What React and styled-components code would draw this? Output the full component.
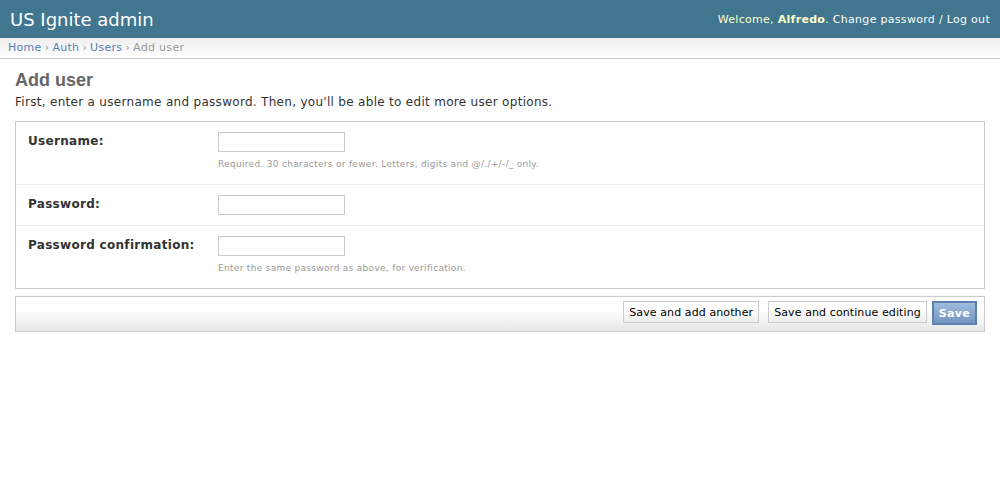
import styled, { createGlobalStyle } from "styled-components";

const GlobalStyle = createGlobalStyle`
  html, body {
    margin: 0;
    padding: 0;
    background: #fff;
  }
  body {
    font-family: "DejaVu Sans", "Liberation Sans", Arial, sans-serif;
    font-size: 12px;
    letter-spacing: 0.3px;
    color: #333;
  }
  a {
    color: #5b80b2;
    text-decoration: none;
  }
`;

const Header = styled.div`
  height: 38px;
  background: #417690;
  color: #fff;
  display: flex;
  align-items: center;
  justify-content: space-between;
  padding: 0 10px;
`;

const Brand = styled.h1`
  margin: 0;
  font-size: 18px;
  font-weight: normal;
  letter-spacing: 0;
  color: #fff;
`;

const UserTools = styled.div`
  font-size: 11px;
  color: #ffc;
  a {
    color: #fff;
  }
`;

const Breadcrumbs = styled.div`
  border-bottom: 1px solid #ccc;
  background: linear-gradient(#efefef, #fff);
  padding: 2px 8px 3px;
  font-size: 11px;
  line-height: 15px;
  color: #999;
`;

const Sep = styled.span`
  color: #999;
  margin: 0 3px;
`;

const Content = styled.div`
  padding: 10px 15px;
`;

const Title = styled.h1`
  margin: 0 0 4px;
  font-family: "Liberation Sans", Arial, sans-serif;
  font-size: 18px;
  line-height: 22px;
  font-weight: bold;
  letter-spacing: 0;
  color: #666;
`;

const Intro = styled.p`
  margin: 1px 0 11px;
  font-size: 12px;
  line-height: 15px;
`;

const Fieldset = styled.div`
  border: 1px solid #ccc;
`;

const Row = styled.div`
  display: flex;
  padding: 10px 12px;
  border-bottom: ${(p) => (p.$last ? "none" : "1px solid #eee")};
`;

const Label = styled.label`
  width: 190px;
  flex-shrink: 0;
  margin-top: 2px;
  font-weight: bold;
  font-size: 12px;
  line-height: 15px;
  color: #333;
`;

const Field = styled.div`
  display: flex;
  flex-direction: column;
`;

const Input = styled.input`
  box-sizing: border-box;
  width: 127px;
  height: 20px;
  border: 1px solid #ccc;
  padding: 2px 3px;
  margin: 0;
  font-family: inherit;
  font-size: 11px;
`;

const Help = styled.p`
  margin: 6px 0 4px;
  font-size: 9px;
  line-height: 12px;
  color: #999;
`;

const SubmitRow = styled.div`
  margin-top: 7px;
  border: 1px solid #ccc;
  background: linear-gradient(#fff 40%, #e6e6e6);
  padding: 4px 7px 6px;
  display: flex;
  justify-content: flex-end;
  align-items: flex-start;
`;

const Button = styled.button`
  box-sizing: border-box;
  height: 22px;
  margin-left: ${(p) => p.$gap}px;
  padding: 0 5px;
  border: 1px solid #ccc;
  background: linear-gradient(#fff 40%, #ececec);
  font-family: inherit;
  font-size: 11px;
  letter-spacing: 0.1px;
  color: #000;
  cursor: pointer;
`;

const DefaultButton = styled(Button)`
  height: 24px;
  border: 2px solid #5b80b2;
  background: linear-gradient(#9dbbdc, #7295c0);
  color: #fff;
  font-weight: bold;
  letter-spacing: 0.3px;
`;

export default function App() {
  return (
    <>
      <GlobalStyle />
      <Header>
        <Brand>US Ignite admin</Brand>
        <UserTools>
          Welcome, <strong>Alfredo</strong>. <a href="#">Change password</a> /{" "}
          <a href="#">Log out</a>
        </UserTools>
      </Header>
      <Breadcrumbs>
        <a href="#">Home</a>
        <Sep>›</Sep>
        <a href="#">Auth</a>
        <Sep>›</Sep>
        <a href="#">Users</a>
        <Sep>›</Sep>
        Add user
      </Breadcrumbs>
      <Content>
        <Title>Add user</Title>
        <Intro>
          First, enter a username and password. Then, you'll be able to edit more user options.
        </Intro>
        <Fieldset>
          <Row>
            <Label>Username:</Label>
            <Field>
              <Input type="text" />
              <Help>Required. 30 characters or fewer. Letters, digits and @/./+/-/_ only.</Help>
            </Field>
          </Row>
          <Row>
            <Label>Password:</Label>
            <Field>
              <Input type="password" />
            </Field>
          </Row>
          <Row $last>
            <Label>Password confirmation:</Label>
            <Field>
              <Input type="password" />
              <Help>Enter the same password as above, for verification.</Help>
            </Field>
          </Row>
        </Fieldset>
        <SubmitRow>
          <Button $gap={0}>Save and add another</Button>
          <Button $gap={9}>Save and continue editing</Button>
          <DefaultButton $gap={5}>Save</DefaultButton>
        </SubmitRow>
      </Content>
    </>
  );
}
